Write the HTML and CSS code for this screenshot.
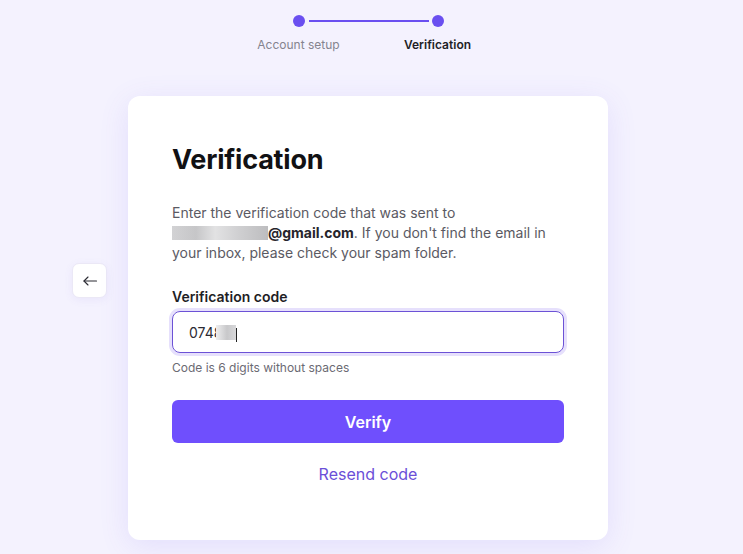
FILE: index.html
```html
<!DOCTYPE html>
<html lang="en">
<head>
<meta charset="utf-8">
<title>Verification</title>
<link rel="stylesheet" href="styles.css">
</head>
<body>
<div class="page">
  <div class="stepper">
    <div class="step step-done">
      <span class="dot"></span>
      <span class="step-label">Account setup</span>
    </div>
    <div class="step step-current">
      <span class="dot"></span>
      <span class="step-label">Verification</span>
    </div>
  </div>

  <div class="main">
    <div class="side">
      <button class="back" aria-label="Back">
        <svg width="16" height="16" viewBox="0 0 16 16" fill="none" stroke="#2b2b33" stroke-width="1.1" stroke-linecap="round" stroke-linejoin="round"><path d="M14.5 8H2"/><path d="M6 4L2 8l4 4"/></svg>
      </button>
    </div>
    <div class="card">
      <h1 class="title">Verification</h1>
      <p class="desc">Enter the verification code that was sent to<br><span class="redact"></span><strong>@gmail.com</strong>. If you don't find the email in your inbox, please check your spam folder.</p>
      <label class="label">Verification code</label>
      <div class="input"><span class="val">0748</span><span class="redact-sm"></span><span class="caret"></span></div>
      <div class="hint">Code is 6 digits without spaces</div>
      <button class="verify">Verify</button>
      <div class="resend-row"><a class="resend">Resend code</a></div>
    </div>
    <div class="side"></div>
  </div>
</div>
</body>
</html>
```
FILE: styles.css
```css
* { box-sizing: border-box; }
html, body { margin: 0; padding: 0; }
body {
  background: #f4f2fe;
  font-family: Inter, "Noto Sans", "Liberation Sans", sans-serif;
  color: #1a1a1f;
  width: 743px;
  height: 554px;
  overflow: hidden;
}
.page {
  padding-right: 7px;
  display: flex;
  flex-direction: column;
  align-items: center;
}
.stepper {
  display: flex;
  padding-top: 15px;
  height: 96px;
}
.step {
  width: 139px;
  display: flex;
  flex-direction: column;
  align-items: center;
  position: relative;
}
.dot {
  width: 12px;
  height: 12px;
  border-radius: 50%;
  background: #6a4ff0;
}
.step-done::after {
  content: "";
  position: absolute;
  top: 5px;
  left: 80px;
  width: 120px;
  height: 2px;
  background: #6a4ff0;
}
.step-label {
  margin-top: 10px;
  font-size: 12px;
  line-height: 16px;
  color: #85848f;
  white-space: nowrap;
}
.step-current .step-label {
  color: #1e1e26;
  font-weight: 600;
}
.main {
  display: grid;
  grid-template-columns: 1fr 480px 1fr;
  width: 736px;
}
.side {
  display: flex;
  justify-content: flex-end;
  align-items: flex-start;
}
.back {
  margin-top: 167px;
  margin-right: 21px;
  width: 35px;
  height: 35px;
  padding: 0;
  border: 1px solid #ebe8f6;
  border-radius: 7px;
  background: #fff;
  display: flex;
  align-items: center;
  justify-content: center;
  box-shadow: 0 2px 8px rgba(110, 90, 220, 0.08);
}
.card {
  background: #fff;
  border-radius: 12px;
  padding: 47px 44px 54px;
  box-shadow: 0 6px 30px rgba(108, 84, 240, 0.12);
  height: 444px;
}
.title {
  margin: 0;
  font-size: 27px;
  line-height: 34px;
  font-weight: 700;
  color: #111114;
  letter-spacing: -0.2px;
}
.desc {
  margin: 26px 0 0;
  font-size: 14px;
  line-height: 20px;
  color: #5b5a63;
}
.desc strong {
  color: #26252c;
  font-weight: 700;
}
.redact {
  display: inline-block;
  width: 96px;
  height: 14px;
  vertical-align: -2px;
  background: linear-gradient(90deg, #d2d2d4 0%, #c6c6c8 25%, #e2e2e3 45%, #cfcfd1 70%, #bdbdbf 100%);
}
.label {
  display: block;
  margin-top: 24px;
  font-size: 14px;
  line-height: 20px;
  font-weight: 600;
  color: #1f1e25;
}
.input {
  margin-top: 4px;
  height: 42px;
  border: 1.5px solid #6c52d6;
  border-radius: 8px;
  box-shadow: 0 0 0 3px #e6e0fc;
  display: flex;
  align-items: center;
  padding-left: 16px;
  font-size: 14px;
  color: #2c2b33;
}
.redact-sm {
  display: inline-block;
  width: 20px;
  height: 15px;
  margin-left: -6px;
  background: linear-gradient(90deg, #eeeeef, #c8c8ca 55%, #d8d8da);
}
.caret {
  display: inline-block;
  width: 1px;
  height: 14px;
  margin-left: 0;
  margin-top: 6px;
  background: #222;
}
.hint {
  margin-top: 7px;
  font-size: 12px;
  line-height: 16px;
  color: #6b6a73;
}
.verify {
  display: block;
  width: 100%;
  margin-top: 24px;
  height: 43px;
  border: 0;
  border-radius: 6px;
  background: #6f4ffd;
  color: #fff;
  font-family: inherit;
  font-size: 16px;
  font-weight: 600;
}
.resend-row {
  margin-top: 19px;
  text-align: center;
}
.resend {
  font-size: 16px;
  line-height: 24px;
  color: #6b4fd8;
}
```
